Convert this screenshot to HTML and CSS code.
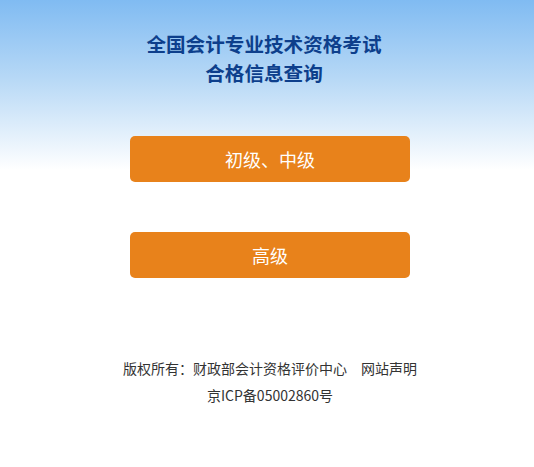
FILE: index.html
```html
<!DOCTYPE html>
<html lang="zh-CN">
<head>
<meta charset="utf-8">
<title>全国会计专业技术资格考试合格信息查询</title>
<link rel="stylesheet" href="styles.css">
</head>
<body>
<div class="page">
  <h1 class="title">全国会计专业技术资格考试<br>合格信息查询</h1>
  <div class="buttons">
    <a class="btn" href="#">初级、中级</a>
    <a class="btn" href="#">高级</a>
  </div>
  <div class="footer">
    <p class="line">版权所有：财政部会计资格评价中心&emsp;网站声明</p>
    <p class="line">京ICP备05002860号</p>
  </div>
</div>
</body>
</html>
```
FILE: styles.css
```css
html, body {
  margin: 0;
  padding: 0;
}
body {
  background: #fff linear-gradient(to bottom, #80bbf2 0px, #b8d9f6 80px, #ffffff 170px) no-repeat;
  background-size: 100% 170px;
  font-family: "Noto Sans CJK SC", "Noto Sans", sans-serif;
  min-height: 467px;
}
.page {
  display: flex;
  flex-direction: column;
  align-items: center;
  padding-top: 29px;
  padding-left: 6px;
}
.title {
  margin: 0 12px 0 0;
  font-size: 19.6px;
  line-height: 29px;
  font-weight: bold;
  color: #0d3f8c;
  text-align: center;
}
.buttons {
  display: flex;
  flex-direction: column;
  gap: 50px;
  margin-top: 49px;
}
.btn {
  display: block;
  width: 280px;
  height: 46px;
  line-height: 46px;
  border-radius: 5px;
  background: #e8821b;
  color: #fff;
  font-size: 18px;
  text-align: center;
  text-decoration: none;
}
.footer {
  margin-top: 77px;
  text-align: center;
  color: #333;
  font-size: 14px;
}
.line {
  margin: 0;
  line-height: 27px;
}
```
